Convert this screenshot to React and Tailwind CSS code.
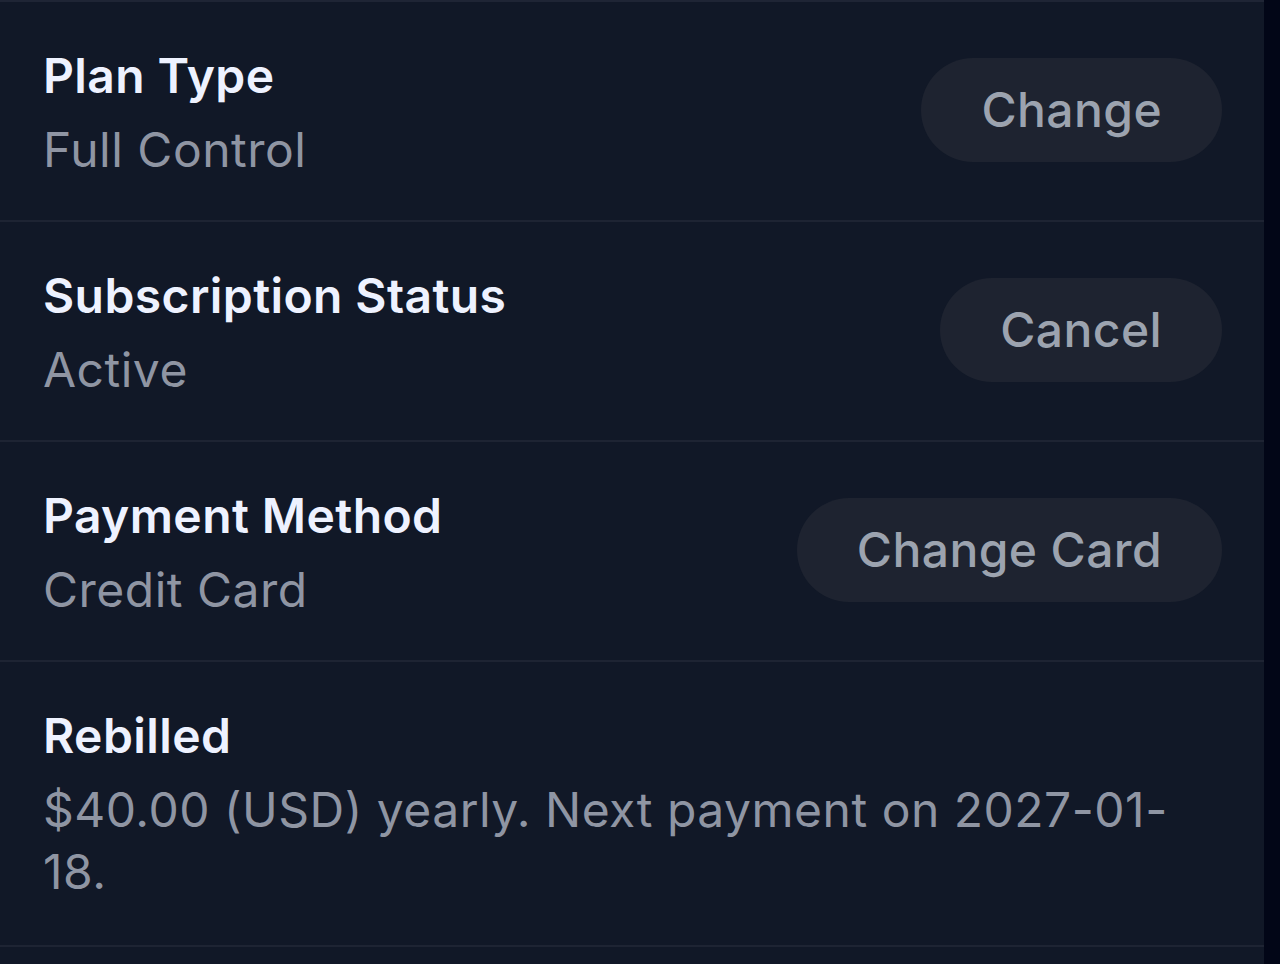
import React from 'react';

const rows = [
  { title: 'Plan Type', value: 'Full Control', action: 'Change' },
  { title: 'Subscription Status', value: 'Active', action: 'Cancel' },
  { title: 'Payment Method', value: 'Credit Card', action: 'Change Card' },
  { title: 'Rebilled', value: '$40.00 (USD) yearly. Next payment on 2027-01-18.' },
];

export default function App() {
  return (
    <div className="flex min-h-[964px] w-full bg-[#020617] font-['Inter',sans-serif]">
      <div className="w-[1264px] bg-[#111827] border-t-2 border-[#1f2535]">
        {rows.map((row) => (
          <div
            key={row.title}
            className="flex items-center justify-between gap-8 border-b-2 border-[#1e2433] pl-[43px] pr-[42px] pt-[44px] pb-[39px] last:pb-[42px]"
          >
            <div className="flex flex-col gap-[13px] min-w-0">
              <div className="text-[48px] leading-[60px] font-semibold tracking-[0.4px] text-[#eef2ff]">{row.title}</div>
              <div className="text-[48px] leading-[62px] text-[#8f95a3] tracking-[0.5px] max-w-[1140px]">{row.value}</div>
            </div>
            {row.action && (
              <button className="shrink-0 h-[104px] mb-[7px] px-[60px] rounded-full bg-[#1e2330] text-[48px] font-medium text-[#9ca3af] tracking-[0.4px]">
                {row.action}
              </button>
            )}
          </div>
        ))}
      </div>
    </div>
  );
}
